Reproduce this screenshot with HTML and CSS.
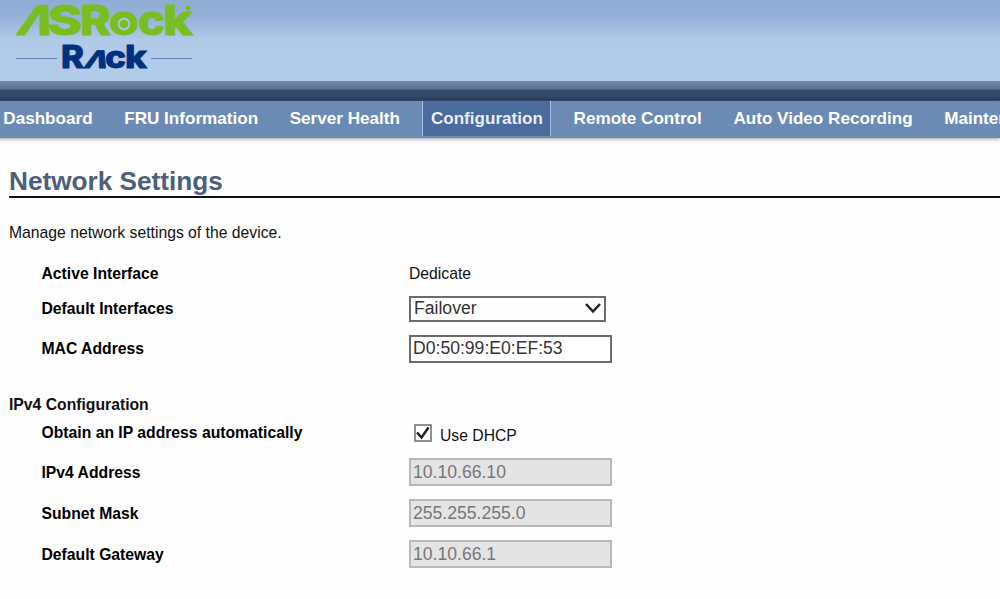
FILE: index.html
```
<!DOCTYPE html>
<html lang="en">
  <head>
    <meta charset="UTF-8" />
    <meta name="viewport" content="width=device-width, initial-scale=1.0" />
    <title>Network Settings</title>
    <link rel="stylesheet" href="styles.css">
  </head>
  <body>
    <header class="header">
      <svg class="logo" width="200" height="80" viewBox="0 0 200 80">
        <g class="brand">
          <text transform="translate(15 35) skewX(-19)" textLength="35" lengthAdjust="spacingAndGlyphs">Λ</text>
          <text x="48" y="35" textLength="34" lengthAdjust="spacingAndGlyphs">S</text>
          <text x="80" y="35" textLength="31" lengthAdjust="spacingAndGlyphs">R</text>
          <text x="109" y="35" textLength="30" lengthAdjust="spacingAndGlyphs">o</text>
          <text x="138" y="35" textLength="27" lengthAdjust="spacingAndGlyphs">c</text>
          <text x="163" y="35" textLength="30" lengthAdjust="spacingAndGlyphs">k</text>
        </g>
        <circle class="hole" cx="124" cy="24" r="6.3" />
        <circle class="eye" cx="124" cy="24" r="4.3" />
        <circle class="dot" cx="188" cy="8" r="2.5" />
        <path class="rule" d="M16 58.5h41M151 58.5h41" />
        <g class="rack">
          <text x="61" y="68" textLength="23" lengthAdjust="spacingAndGlyphs">R</text>
          <text class="small" transform="translate(83 68) skewX(-19)" textLength="23" lengthAdjust="spacingAndGlyphs">Λ</text>
          <text x="105" y="68" textLength="21" lengthAdjust="spacingAndGlyphs">c</text>
          <text x="125" y="68" textLength="22" lengthAdjust="spacingAndGlyphs">k</text>
        </g>
      </svg>
    </header>
    <div class="strip"></div>
    <nav class="menu">
      <a>Dashboard</a>
      <a>FRU Information</a>
      <a>Server Health</a>
      <a class="active">Configuration</a>
      <a>Remote Control</a>
      <a>Auto Video Recording</a>
      <a>Maintenance</a>
    </nav>

    <main class="content">
      <h1>Network Settings</h1>
      <p class="intro">Manage network settings of the device.</p>
      <form>
        <div class="row first">
          <label>Active Interface</label>
          <span class="value">Dedicate</span>
        </div>
        <div class="row">
          <label>Default Interfaces</label>
          <div class="select">
            <span>Failover</span>
            <svg width="16" height="13" viewBox="0 0 16 13"><path d="M1 2l7 7.5 7-7.5" /></svg>
          </div>
        </div>
        <div class="row">
          <label>MAC Address</label>
          <input type="text" value="D0:50:99:E0:EF:53">
        </div>

        <h2>IPv4 Configuration</h2>
        <div class="row dhcp">
          <label>Obtain an IP address automatically</label>
          <div class="check">
            <svg width="18" height="18" viewBox="0 0 18 18">
              <rect x="1" y="1" width="16" height="16" />
              <path d="M3 8.5l4.5 5 7-10" />
            </svg>
            <span>Use DHCP</span>
          </div>
        </div>
        <div class="row ip">
          <label>IPv4 Address</label>
          <input type="text" value="10.10.66.10" disabled>
        </div>
        <div class="row ip">
          <label>Subnet Mask</label>
          <input type="text" value="255.255.255.0" disabled>
        </div>
        <div class="row ip">
          <label>Default Gateway</label>
          <input type="text" value="10.10.66.1" disabled>
        </div>
      </form>
    </main>
  </body>
</html>
```

FILE: styles.css
```
* {
  box-sizing: border-box;
  margin: 0;
  padding: 0;
}
body {
  background-color: #fefefe;
  color: #111;
  font-family: "Liberation Sans", Arial, sans-serif;
  font-size: 15.72px;
  overflow: hidden;
}
.header {
  height: 81px;
  background: linear-gradient(#8facd5, #95b1da 20%, #b0cae7 50%, #b2cde9);
}
.logo {
  display: block;
}
.brand {
  fill: #78be20;
  stroke: #78be20;
  stroke-width: 0.8;
  font-family: Inter, sans-serif;
  font-size: 41px;
  font-weight: 800;
}
.eye,
.dot {
  fill: #78be20;
}
.hole {
  fill: #a9c5e4;
}
.rule {
  stroke: #5b82b8;
}
.rack {
  fill: #00307f;
  stroke: #00307f;
  stroke-width: 0.8;
  font-family: Inter, sans-serif;
  font-size: 31px;
  font-weight: 800;
}
.small {
  font-size: 24px;
}
.strip {
  height: 20px;
  background: linear-gradient(#7488ab 0, #5d7196 8px, #354b6d 9px, #34486a 16px, #2d3f5c 17px, #2d3f5c 19px, #48618a 20px);
}
.menu {
  display: flex;
  height: 37px;
  padding-bottom: 1px;
  margin-left: -12.5px;
  background-color: #6b8bb5;
  border-bottom: 1px solid #6d8b9f;
  box-shadow: 0 1px 4px rgba(0, 0, 0, 0.4);
  color: #fff;
  font-size: 17.1px;
  font-weight: bold;
  line-height: 35px;
  white-space: nowrap;
}
.menu a {
  padding: 0 15.8px;
}
.menu .active {
  margin: 0 6.5px 0 6.8px;
  padding: 0 7.4px;
  background-color: #4a6b9b;
  border: solid #a5bfe2;
  border-width: 0 1px;
  color: #e8edff;
}
.content {
  padding: 27px 0 0 9px;
}
h1 {
  height: 33px;
  border-bottom: 2px solid #111;
  color: #4d5f7b;
  font-size: 26.2px;
  line-height: 33px;
}
.intro {
  padding-top: 25px;
  line-height: 20px;
}
.row {
  display: flex;
  align-items: center;
  height: 40px;
  padding-left: 32.5px;
}
.row label {
  width: 367.5px;
  color: #000;
  font-weight: bold;
}
.first {
  height: 30px;
  margin-top: 16px;
}
.select {
  display: flex;
  align-items: center;
  justify-content: space-between;
  width: 197px;
  height: 26px;
  padding: 0 3px 1px;
  border: 2px solid #6c6c6c;
  color: #333;
  font-size: 17.6px;
}
.select path {
  fill: none;
  stroke: #222;
  stroke-width: 2.5;
}
input {
  width: 202.5px;
  height: 28px;
  padding: 0 2px 1px;
  border: 2px solid #6c6c6c;
  background-color: #fff;
  color: #333;
  font-family: inherit;
  font-size: 17.6px;
}
input:disabled {
  padding: 2px 2px 0;
  border-color: #b9b9b9;
  background-color: #e4e4e4;
  color: #777;
}
h2 {
  margin-top: 22px;
  font-size: 15.72px;
  line-height: 28px;
}
.dhcp {
  height: 28px;
  margin-bottom: 4px;
}
.check {
  display: flex;
  align-self: flex-start;
  gap: 8px;
  padding: 5px 0 0 5px;
}
.check span {
  padding-top: 3px;
}
.check rect {
  fill: #fff;
  stroke: #6c6c6c;
  stroke-width: 1.5;
}
.check path {
  fill: none;
  stroke: #222;
  stroke-width: 2.5;
}
.ip {
  height: 41px;
}
.ip label {
  padding-top: 2px;
}
```
